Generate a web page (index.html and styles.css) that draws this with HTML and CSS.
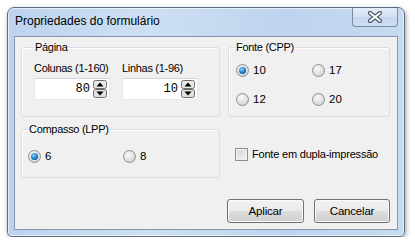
FILE: index.html
```html
<!DOCTYPE html>
<html>
<head>
    <title>Propriedades do formulário</title>
    <link rel="stylesheet" href="styles.css">
</head>
<body>
    <div class="window">
        <div class="titlebar">
            <span class="title">Propriedades do formulário</span>
            <div class="close">
                <svg width="16" height="12" viewBox="0 0 16 12">
                    <path d="M3 2 L13 10 M13 2 L3 10" stroke="#4a5566" stroke-width="4.2" stroke-linecap="round"/>
                    <path d="M3 2 L13 10 M13 2 L3 10" stroke="#ffffff" stroke-width="2" stroke-linecap="round"/>
                </svg>
            </div>
        </div>
        <div class="client">
            <fieldset class="group page">
                <legend>Página</legend>
                <div class="field">
                    <label for="cols">Colunas (1-160)</label>
                    <div class="spin">
                        <input type="text" id="cols" value="80">
                        <svg class="arrows" width="14" height="18" viewBox="0 0 14 18">
                            <rect x="0.5" y="0.5" width="13" height="8" rx="2" fill="#e8e8e8" stroke="#6f6f6f"/>
                            <rect x="0.5" y="9.5" width="13" height="8" rx="2" fill="#e0e0e0" stroke="#6f6f6f"/>
                            <path d="M3.5 6.5 L7 2.5 L10.5 6.5 Z" fill="#000"/>
                            <path d="M3.5 11.5 L7 15.5 L10.5 11.5 Z" fill="#000"/>
                        </svg>
                    </div>
                </div>
                <div class="field">
                    <label for="rows">Linhas (1-96)</label>
                    <div class="spin">
                        <input type="text" id="rows" value="10">
                        <svg class="arrows" width="14" height="18" viewBox="0 0 14 18">
                            <rect x="0.5" y="0.5" width="13" height="8" rx="2" fill="#e8e8e8" stroke="#6f6f6f"/>
                            <rect x="0.5" y="9.5" width="13" height="8" rx="2" fill="#e0e0e0" stroke="#6f6f6f"/>
                            <path d="M3.5 6.5 L7 2.5 L10.5 6.5 Z" fill="#000"/>
                            <path d="M3.5 11.5 L7 15.5 L10.5 11.5 Z" fill="#000"/>
                        </svg>
                    </div>
                </div>
            </fieldset>

            <fieldset class="group font">
                <legend>Fonte (CPP)</legend>
                <div class="radios">
                    <span class="radio"><i class="dot on"></i>10</span>
                    <span class="radio"><i class="dot"></i>17</span>
                    <span class="radio"><i class="dot"></i>12</span>
                    <span class="radio"><i class="dot"></i>20</span>
                </div>
            </fieldset>

            <fieldset class="group pitch">
                <legend>Compasso (LPP)</legend>
                <div class="radios">
                    <span class="radio"><i class="dot on"></i>6</span>
                    <span class="radio"><i class="dot"></i>8</span>
                </div>
            </fieldset>

            <div class="check">
                <i class="box"></i>Fonte em dupla-impressão
            </div>

            <div class="buttons">
                <button class="apply">Aplicar</button>
                <button class="cancel">Cancelar</button>
            </div>
        </div>
    </div>
</body>
</html>
```

FILE: styles.css
```css
body {
    margin: 0;
    background: #ffffff;
    font-family: "Liberation Sans", Arial, sans-serif;
    font-size: 11px;
    letter-spacing: -0.3px;
    color: #000;
}

.window {
    margin: 7px 0 0 7px;
    width: 398px;
    height: 230px;
    box-sizing: border-box;
    padding: 0 6px 6px 6px;
    border: 1px solid #5d6d80;
    border-radius: 7px 7px 5px 5px;
    background: linear-gradient(90deg, #bcd3ee 0%, #cddff3 35%, #bed4ee 70%, #c6daf1 100%);
    box-shadow: 1px 2px 5px rgba(0, 0, 0, 0.35), inset 0 0 0 1px rgba(255, 255, 255, 0.6);
    display: flex;
    flex-direction: column;
}

.titlebar {
    height: 28px;
    display: flex;
    justify-content: space-between;
    align-items: flex-start;
}

.title {
    font-size: 12px;
    letter-spacing: 0;
    margin: 6px 0 0 1px;
    color: #000;
}

.close {
    width: 44px;
    height: 18px;
    border: 1px solid #7b8ca2;
    border-top: none;
    border-radius: 0 0 4px 4px;
    background: linear-gradient(#e4edf8, #d3e1f2 50%, #c4d6ee 51%, #cfdef2);
    display: flex;
    justify-content: center;
    align-items: center;
}

.client {
    flex: 1;
    background: #f0f0f0;
    border: 1px solid #8596ad;
    padding: 4px 8px 6px 6px;
    display: grid;
    grid-template-columns: 199px 162px;
    grid-template-rows: 76px 55px auto;
    column-gap: 8px;
    row-gap: 6px;
}

.group {
    margin: 0;
    padding: 0 6px;
    border: 1px solid #d5dfe5;
    border-radius: 3px;
    box-shadow: inset 1px 1px 0 #fff;
    min-width: 0;
}

.group legend {
    padding: 0 1px;
    line-height: 13px;
}

.page {
    display: flex;
    gap: 12px;
    padding-left: 12px;
}

.field label {
    display: block;
    margin-top: 8px;
    line-height: 13px;
}

.spin {
    margin-top: 3px;
    width: 76px;
    height: 22px;
    box-sizing: border-box;
    border: 1px solid #e3e9ef;
    border-top-color: #d0d5db;
    background: #fff;
    display: flex;
    align-items: center;
}

.spin input {
    width: 55px;
    border: none;
    padding: 0;
    text-align: right;
    font-family: "Liberation Mono", monospace;
    font-size: 12px;
    letter-spacing: 0;
    outline: none;
    background: transparent;
}

.arrows {
    margin-left: 3px;
}

.radios {
    display: grid;
    align-items: center;
}

.font .radios {
    grid-template-columns: 76px 76px;
    row-gap: 16px;
    margin-top: 10px;
    padding-left: 1px;
}

.pitch .radios {
    grid-template-columns: 95px 95px;
    margin-top: 14px;
}

.radio {
    display: flex;
    align-items: center;
    font-size: 11.5px;
    letter-spacing: 0;
    line-height: 13px;
}

.dot {
    width: 11px;
    height: 11px;
    border: 1px solid #8f8f8f;
    border-radius: 50%;
    background: radial-gradient(circle at 40% 35%, #fafafa, #d8d8d8 70%, #c9c9c9);
    margin-right: 4px;
    display: flex;
    justify-content: center;
    align-items: center;
}

.dot.on::after {
    content: "";
    width: 7px;
    height: 7px;
    border-radius: 50%;
    background: radial-gradient(circle at 40% 35%, #8fd3ff, #1178c0 55%, #0b3f78);
}

.check {
    display: flex;
    align-items: center;
    margin: 25px 0 0 7px;
    align-self: start;
    line-height: 13px;
    font-size: 11px;
    letter-spacing: -0.2px;
}

.box {
    width: 11px;
    height: 11px;
    border: 1px solid #8f8f8f;
    background: linear-gradient(135deg, #d4d4d4, #f4f4f4);
    box-shadow: inset 0 0 0 1px #f4f4f4;
    margin-right: 4px;
}

.buttons {
    grid-column: 1 / 3;
    grid-row: 3;
    display: flex;
    justify-content: flex-end;
    align-items: flex-end;
    gap: 10px;
}

.buttons button {
    width: 77px;
    height: 24px;
    border: 1px solid #707070;
    border-radius: 3px;
    background: linear-gradient(#f2f2f2 0%, #ebebeb 48%, #dddddd 52%, #cfcfcf 100%);
    box-shadow: inset 0 0 0 1px #fbfbfb;
    font-family: "Liberation Sans", Arial, sans-serif;
    font-size: 11.5px;
    letter-spacing: -0.2px;
    color: #000;
    padding: 0;
}

.buttons .cancel {
    width: 76px;
}
```
